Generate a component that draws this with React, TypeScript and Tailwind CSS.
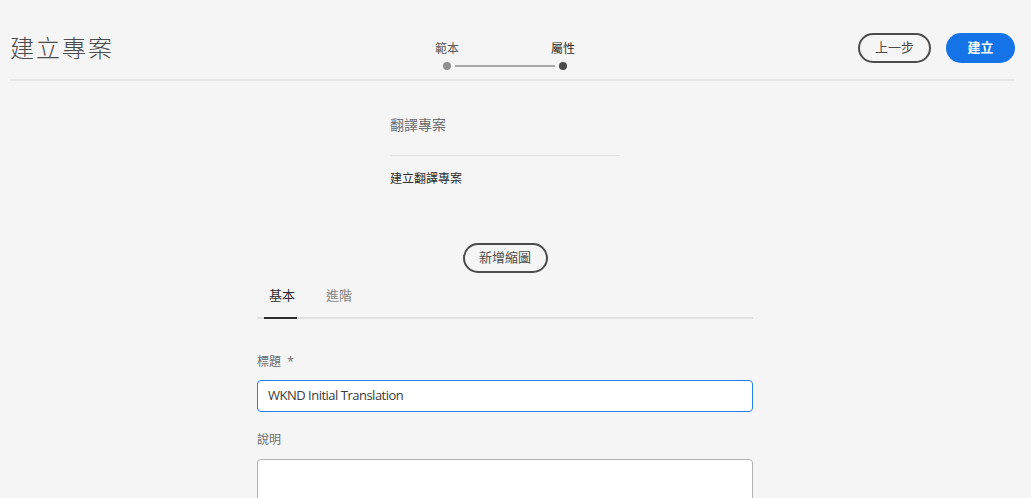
const cjk = '"Noto Sans", "Noto Sans CJK TC", sans-serif';

function Steps() {
  return (
    <div className="self-start mt-[24px] flex flex-col items-center">
      <div className="w-[140px] flex justify-between text-[12px] leading-[16px]">
        <span className="text-[#5a5a5a]">範本</span>
        <span className="text-[#2c2c2c]">屬性</span>
      </div>
      <div className="mt-[5px] flex items-center">
        <div className="w-[8px] h-[8px] rounded-full bg-[#909090]" />
        <div className="mx-[4px] w-[100px] h-[2px] bg-[#a8a8a8]" />
        <div className="w-[8px] h-[8px] rounded-full bg-[#4b4b4b]" />
      </div>
    </div>
  );
}

export default function App() {
  return (
    <div className="min-h-screen bg-[#f5f5f5] overflow-hidden" style={{ fontFamily: cjk }}>
      {/* Header */}
      <div className="ml-[10px] mr-[16px] h-[81px] pt-[17px] flex items-center border-b-2 border-[#e8e8e8]">
        <div className="w-[425px] text-[24px] leading-[30px] tracking-[2px] font-light text-[#4b4b4b]">
          建立專案
        </div>
        <Steps />
        <div className="flex-1" />
        <div className="flex items-center gap-[15px]">
          <button className="w-[73px] h-[30px] rounded-full border-2 border-[#4b4b4b] text-[13px] text-[#4b4b4b] flex items-center justify-center">
            上一步
          </button>
          <button className="w-[69px] h-[30px] rounded-full bg-[#1473e6] text-[13px] font-bold text-white flex items-center justify-center">
            建立
          </button>
        </div>
      </div>

      {/* Content */}
      <div className="pr-[21px] flex flex-col items-center">
        <div className="w-[230px] mt-[34px]">
          <div className="text-[14px] leading-[20px] text-[#707070]">翻譯專案</div>
          <div className="mt-[20px] h-px bg-[#e3e3e3]" />
          <div className="mt-[15px] text-[12px] leading-[16px] text-[#2c2c2c]">建立翻譯專案</div>
        </div>

        <button className="mt-[56px] w-[85px] h-[30px] rounded-full border-2 border-[#4b4b4b] text-[13px] text-[#4b4b4b] flex items-center justify-center">
          新增縮圖
        </button>

        <div className="w-[496px]">
          <div className="flex border-b-2 border-[#e1e1e1] text-[13px] leading-[20px]">
            <div className="ml-[7px] pl-[5px] w-[33px] pt-[12px] pb-[12px] border-b-2 border-[#2c2c2c] -mb-[2px] text-[#2c2c2c]">
              基本
            </div>
            <div className="ml-[29px] pt-[12px] pb-[12px] text-[#858585]">進階</div>
          </div>

          <div className="mt-[35px] text-[12px] leading-[16px] text-[#6e6e6e]">
            標題 <span className="ml-[3px]">*</span>
          </div>
          <div className="mt-[10px] h-[32px] rounded-[4px] border border-[#2680eb] bg-white px-[10px] flex items-center text-[13px] text-[#3a3a3a]" style={{ fontFamily: '"Open Sans", sans-serif' }}>
            <span className="tracking-[-0.5px]">WKND Initial Translation</span>
          </div>

          <div className="mt-[20px] text-[12px] leading-[16px] text-[#6e6e6e]">說明</div>
          <div className="mt-[11px] h-[70px] rounded-[4px] border border-[#b3b3b3] bg-white" />
        </div>
      </div>
    </div>
  );
}
